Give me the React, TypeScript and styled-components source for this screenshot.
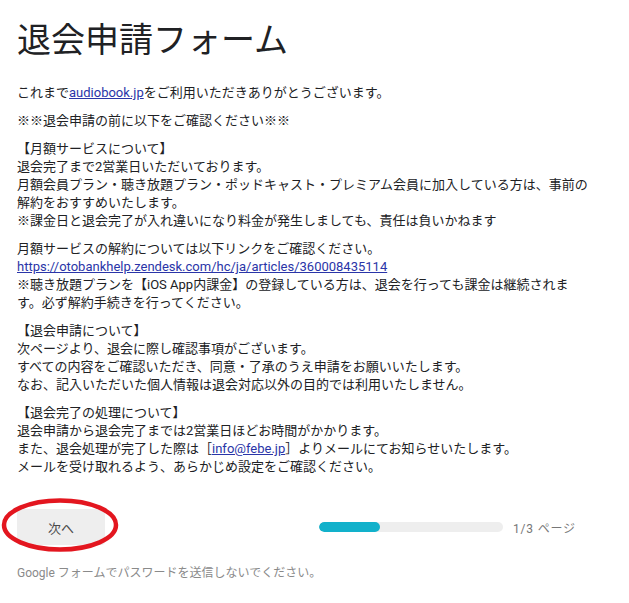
import React from 'react';
import styled, { createGlobalStyle } from 'styled-components';

const GlobalStyle = createGlobalStyle`
	html, body {
		margin: 0;
		padding: 0;
		background: #fff;
	}
	body {
		font-family: Roboto, 'Noto Sans CJK JP', sans-serif;
		color: #202124;
	}
`;

const Link = styled.a`
	color: #2a35a8;
	text-decoration: underline;
`;

function getSections(): React.ReactNode[][] {
	return [
		[
			<>
				これまで<Link href='#'>audiobook.jp</Link>をご利用いただきありがとうございます。
			</>,
		],
		['※※退会申請の前に以下をご確認ください※※'],
		[
			'【月額サービスについて】',
			'退会完了まで2営業日いただいております。',
			'月額会員プラン・聴き放題プラン・ポッドキャスト・プレミアム会員に加入している方は、事前の',
			'解約をおすすめいたします。',
			'※課金日と退会完了が入れ違いになり料金が発生しましても、責任は負いかねます',
		],
		[
			'月額サービスの解約については以下リンクをご確認ください。',
			<Link href='#'>https://otobankhelp.zendesk.com/hc/ja/articles/360008435114</Link>,
			'※聴き放題プランを【iOS App内課金】の登録している方は、退会を行っても課金は継続されま',
			'す。必ず解約手続きを行ってください。',
		],
		[
			'【退会申請について】',
			'次ページより、退会に際し確認事項がございます。',
			'すべての内容をご確認いただき、同意・了承のうえ申請をお願いいたします。',
			'なお、記入いただいた個人情報は退会対応以外の目的では利用いたしません。',
		],
		[
			'【退会完了の処理について】',
			'退会申請から退会完了までは2営業日ほどお時間がかかります。',
			<>
				また、退会処理が完了した際は［<Link href='#'>info@febe.jp</Link>］よりメールにてお知らせいたします。
			</>,
			'メールを受け取れるよう、あらかじめ設定をご確認ください。',
		],
	];
}

function App() {
	const page = 1;
	const total = 3;
	const sections = getSections();
	return (
		<Wrapper>
			<GlobalStyle />
			<Title>退会申請フォーム</Title>
			<Description>
				{sections.map((lines, i) => (
					<Paragraph key={i}>
						{lines.map((line, j) => (
							<Line key={j}>{line}</Line>
						))}
					</Paragraph>
				))}
			</Description>
			<Nav>
				<NextButton>次へ</NextButton>
				<Progress>
					<Track>
						<Fill style={{ width: `${(page / total) * 100}%` }} />
					</Track>
					<PageLabel>
						{page}/{total} ページ
					</PageLabel>
				</Progress>
				<Circle width='122' height='58' viewBox='0 0 122 58'>
					<ellipse cx='60' cy='28' rx='56' ry='24.5' fill='none' stroke='#e3161f' strokeWidth='4.5' />
				</Circle>
			</Nav>
			<Footer>Google フォームでパスワードを送信しないでください。</Footer>
		</Wrapper>
	);
}

const Wrapper = styled.main`
	padding: 18px 0 0 17px;
	width: 600px;
`;

const Title = styled.h1`
	margin: 0;
	font-family: 'Noto Sans CJK JP', sans-serif;
	font-size: 34px;
	font-weight: 400;
	line-height: 40px;
	color: #202124;
	letter-spacing: 0;
`;

const Description = styled.div`
	margin-top: 26px;
	font-size: 13px;
	line-height: 18px;
	color: #202124;
`;

const Paragraph = styled.div`
	& + & {
		margin-top: 10px;
	}
`;

const Line = styled.div`
	white-space: nowrap;
`;

const Nav = styled.div`
	position: relative;
	margin-top: 33px;
	width: 560px;
	display: flex;
	align-items: center;
	justify-content: space-between;
`;

const NextButton = styled.button`
	width: 88px;
	height: 36px;
	border: none;
	border-radius: 4px;
	background: #eeeeee;
	color: #4a4a4a;
	font-family: Roboto, 'Noto Sans CJK JP', sans-serif;
	font-size: 13px;
	padding: 0;
`;

const Progress = styled.div`
	display: flex;
	align-items: center;
	gap: 10px;
`;

const Track = styled.div`
	width: 184px;
	height: 10px;
	border-radius: 5px;
	background: #eeeeee;
	overflow: hidden;
`;

const Fill = styled.div`
	height: 100%;
	border-radius: 5px;
	background: #12b1cb;
`;

const PageLabel = styled.span`
	min-width: 64px;
	font-size: 12px;
	letter-spacing: 0.8px;
	color: #777;
	white-space: nowrap;
`;

const Circle = styled.svg`
	position: absolute;
	left: -17px;
	top: -12px;
	pointer-events: none;
`;

const Footer = styled.div`
	margin-top: 20px;
	font-size: 12px;
	line-height: 16px;
	color: #8a8a8a;
`;

export default App;
